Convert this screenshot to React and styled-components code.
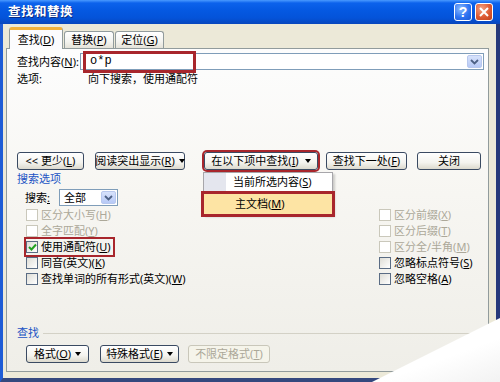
import React from "react";
import styled, { createGlobalStyle } from "styled-components";

const FONT = `"Noto Sans", "Noto Sans CJK SC", sans-serif`;
const RED = "#A8262C";

const Global = createGlobalStyle`
  *, *::before, *::after { box-sizing: border-box; }
  html, body { margin: 0; padding: 0; width: 500px; height: 382px; overflow: hidden; background: #fff; }
  body { font-family: ${FONT}; font-size: 11px; color: #000; }
`;

const Window = styled.div`
  position: relative;
  width: 500px;
  height: 382px;
  display: flex;
  flex-direction: column;
  overflow: hidden;
`;

const TitleBar = styled.div`
  height: 24px;
  flex: none;
  display: flex;
  align-items: center;
  padding: 0 7px 0 8px;
  background: linear-gradient(to bottom, #4A9AFF 0, #0C62EC 3px, #0559E2 10px, #0453D9 18px, #0846BC 24px);
`;

const Title = styled.div`
  flex: 1;
  color: #fff;
  font-weight: bold;
  font-size: 12.5px;
  line-height: 14px;
  letter-spacing: 0.5px;
  text-shadow: 1px 1px 0 #0A2A80;
`;

const CapButton = styled.div`
  width: 18px;
  height: 18px;
  margin-left: 3px;
  border: 1px solid #fff;
  border-radius: 3px;
  display: flex;
  align-items: center;
  justify-content: center;
  color: #fff;
  font-family: "Liberation Sans", sans-serif;
  font-weight: bold;
  font-size: 14px;
  line-height: 14px;
  background: ${(p) =>
    p.$close
      ? "radial-gradient(circle at 35% 30%, #F4A283 0, #DD5A33 55%, #C0421E 100%)"
      : "radial-gradient(circle at 35% 30%, #8CBBFF 0, #2F74F2 55%, #1B58D6 100%)"};
`;

const Body = styled.div`
  flex: 1;
  display: flex;
  flex-direction: column;
  background: #ECE9D8;
  border-left: 3px solid #1E5CD6;
  border-right: 4px solid #26397A;
  border-bottom: 4px solid #34487E;
  padding: 3px 7px 6px 3px;
`;

const TabRow = styled.div`
  display: flex;
  align-items: flex-end;
  height: 22px;
  margin-bottom: -1px;
  padding-left: 3px;
  position: relative;
  z-index: 2;
`;

const Tab = styled.div`
  width: ${(p) => p.$w}px;
  height: ${(p) => (p.$active ? 22 : 17)}px;
  margin-left: ${(p) => p.$ml || 0}px;
  margin-bottom: ${(p) => (p.$active ? 0 : 1)}px;
  display: flex;
  align-items: center;
  justify-content: center;
  line-height: 12px;
  padding-top: ${(p) => (p.$active ? 1 : 0)}px;
  border: 1px solid #919B9C;
  border-bottom: none;
  border-top: ${(p) => (p.$active ? "3px solid #F2B23C" : "1px solid #919B9C")};
  border-radius: 3px 3px 0 0;
  background: ${(p) => (p.$active ? "#FCFCFE" : "linear-gradient(#FFFFFF, #F3F3EF 60%, #E4E2D8)")};
`;

const Panel = styled.div`
  height: 324px;
  position: relative;
  z-index: 1;
  border: 1px solid #919B9C;
  background: linear-gradient(#FDFDFD 0, #F7F6F2 45%, #EFEEE8 100%);
  display: flex;
  flex-direction: column;
  padding: 4px 4px 8px 10px;
`;

const U = styled.span`
  text-decoration: underline;
`;

const FindRow = styled.div`
  display: flex;
  align-items: center;
  height: 17px;
`;

const Label = styled.div`
  width: ${(p) => p.$w}px;
  flex: none;
  line-height: 12px;
  color: ${(p) => (p.$blue ? "#2153C4" : "#000")};
`;

const Combo = styled.div`
  position: relative;
  height: 17px;
  flex: ${(p) => (p.$w ? "none" : "1")};
  width: ${(p) => (p.$w ? `${p.$w}px` : "auto")};
  background: #fff;
  border: 1px solid #7F9DB9;
  display: flex;
  align-items: center;
  padding-left: ${(p) => p.$pl}px;
  padding-right: 1px;
`;

const ComboText = styled.div`
  flex: 1;
  font-family: ${(p) => (p.$mono ? `"Liberation Mono", monospace` : FONT)};
  font-size: ${(p) => (p.$mono ? 12 : 11)}px;
  line-height: 13px;
`;

const DropBtn = styled.div`
  width: 15px;
  height: 13px;
  border: 1px solid #B8C8EE;
  border-radius: 2px;
  background: linear-gradient(#D7E2FB, #B7C9F6);
  display: flex;
  align-items: center;
  justify-content: center;
`;

const RedBox = styled.div`
  position: absolute;
  left: 2px;
  top: -3px;
  width: 113px;
  height: 22px;
  border: 3px solid ${RED};
  pointer-events: none;
`;

const InfoRow = styled.div`
  display: flex;
  margin-top: 3px;
  height: 12px;
`;

const ButtonRow = styled.div`
  display: flex;
  align-items: center;
  margin-top: ${(p) => p.$mt}px;
  padding-left: ${(p) => p.$pl || 0}px;
  height: 18px;
`;

const BtnWrap = styled.div`
  position: relative;
  margin-left: ${(p) => p.$ml || 0}px;
`;

const Btn = styled.div`
  width: ${(p) => p.$w}px;
  height: 18px;
  display: flex;
  align-items: center;
  justify-content: center;
  gap: 4px;
  line-height: 12px;
  white-space: nowrap;
  border: 1px solid ${(p) => (p.$disabled ? "#C9C7BA" : "#3A4A62")};
  border-radius: 3px;
  color: ${(p) => (p.$disabled ? "#ACA899" : "#000")};
  background: ${(p) =>
    p.$disabled ? "#F5F4EA" : "linear-gradient(#FFFFFF 0, #F4F3EE 60%, #DCD9CD 100%)"};
  box-shadow: ${(p) => (p.$mark ? `0 0 0 2px ${RED}` : "none")};
`;

const Caret = styled.span`
  width: 0;
  height: 0;
  border-left: 3px solid transparent;
  border-right: 3px solid transparent;
  border-top: 4px solid #000;
  margin-left: ${(p) => p.$ml || 0}px;
`;

const Menu = styled.div`
  position: absolute;
  top: 20px;
  left: -1px;
  width: 130px;
  background: #fff;
  border: 1px solid #A7A6AA;
  box-shadow: 2px 2px 2px rgba(0, 0, 0, 0.18);
  z-index: 5;
`;

const MenuItem = styled.div`
  display: flex;
  align-items: center;
  height: ${(p) => (p.$hot ? 20 : 18)}px;
  margin-top: ${(p) => (p.$hot ? 3 : 0)}px;
  line-height: 12px;
  background: ${(p) => (p.$hot ? "#FDE4A4" : "#fff")};
  box-shadow: ${(p) => (p.$hot ? `0 0 0 3px ${RED}` : "none")};
  padding-left: ${(p) => (p.$hot ? 31 : 0)}px;
`;

const IconStrip = styled.div`
  width: 22px;
  height: 100%;
  background: #E4E6EE;
  margin-right: 7px;
`;

const SearchRow = styled.div`
  display: flex;
  align-items: center;
  margin-top: 4px;
  padding-left: 8px;
  height: 17px;
`;

const Checks = styled.div`
  display: flex;
  margin-top: 1px;
  padding-left: 9px;
`;

const CheckCol = styled.div`
  display: flex;
  flex-direction: column;
  width: ${(p) => (p.$w ? `${p.$w}px` : "auto")};
`;

const CheckItem = styled.div`
  display: flex;
  align-items: center;
  height: 16px;
  align-self: flex-start;
  padding-right: 2px;
  line-height: 12px;
  color: ${(p) => (p.$disabled ? "#ACA899" : "#000")};
  outline: ${(p) => (p.$mark ? `2px solid ${RED}` : "none")};
  outline-offset: 0px;
`;

const Box = styled.div`
  width: 12px;
  height: 12px;
  margin-right: 3px;
  flex: none;
  display: flex;
  align-items: center;
  justify-content: center;
  border: 1px solid ${(p) => (p.$disabled ? "#CAC8BB" : "#5A6C84")};
  background: ${(p) => (p.$disabled ? "#FFFFFF" : "linear-gradient(135deg, #DEDDD6, #FFFFFF)")};
`;

const Group = styled.div`
  margin-top: auto;
  display: flex;
  flex-direction: column;
`;

const GroupHead = styled.div`
  display: flex;
  align-items: center;
  height: 12px;
`;

const GroupLine = styled.div`
  flex: 1;
  height: 1px;
  margin-left: 4px;
  background: #D3D1C6;
`;

const Curl = styled.div`
  position: absolute;
  right: 0;
  bottom: 0;
  width: 128px;
  height: 64px;
  background: linear-gradient(160deg, #FFFFFF 60%, #F2F2F2 100%);
  clip-path: polygon(0 100%, 100% 0, 100% 100%);
  z-index: 10;
`;

const Chevron = () => (
  <svg width="9" height="6" viewBox="0 0 9 6">
    <path d="M1 1 L4.5 4.5 L8 1" fill="none" stroke="#4D6185" strokeWidth="1.8" />
  </svg>
);

const Check = ({ label, disabled, checked, mark }) => (
  <CheckItem $disabled={disabled} $mark={mark}>
    <Box $disabled={disabled}>
      {checked && (
        <svg width="9" height="8" viewBox="0 0 9 8">
          <path d="M1 4 L3.5 6.5 L8 1.5" fill="none" stroke="#21A121" strokeWidth="2" />
        </svg>
      )}
    </Box>
    <span>{label}</span>
  </CheckItem>
);

export default function App() {
  return (
    <>
      <Global />
      <Window>
        <TitleBar>
          <Title>查找和替换</Title>
          <CapButton>?</CapButton>
          <CapButton $close>
            <svg width="10" height="10" viewBox="0 0 10 10">
              <path d="M1 1 L9 9 M9 1 L1 9" stroke="#fff" strokeWidth="2" />
            </svg>
          </CapButton>
        </TitleBar>
        <Body>
          <TabRow>
            <Tab $active $w={54}>
              <span>查找(<U>D</U>)</span>
            </Tab>
            <Tab $w={50} $ml={1}>
              <span>替换(<U>P</U>)</span>
            </Tab>
            <Tab $w={49} $ml={1}>
              <span>定位(<U>G</U>)</span>
            </Tab>
          </TabRow>
          <Panel>
            <FindRow>
              <Label $w={63}>
                查找内容(<U>N</U>):
              </Label>
              <Combo $pl={9}>
                <ComboText $mono>o*p</ComboText>
                <DropBtn>
                  <Chevron />
                </DropBtn>
                <RedBox />
              </Combo>
            </FindRow>
            <InfoRow>
              <Label $w={71}>选项:</Label>
              <Label>向下搜索，使用通配符</Label>
            </InfoRow>

            <ButtonRow $mt={67}>
              <BtnWrap>
                <Btn $w={67}>
                  <span>&lt;&lt; 更少(<U>L</U>)</span>
                </Btn>
              </BtnWrap>
              <BtnWrap $ml={11}>
                <Btn $w={90}>
                  <span>阅读突出显示(<U>R</U>)</span>
                  <Caret />
                </Btn>
              </BtnWrap>
              <BtnWrap $ml={19}>
                <Btn $w={114} $mark>
                  <span>在以下项中查找(<U>I</U>)</span>
                  <Caret $ml={2} />
                </Btn>
                <Menu>
                  <MenuItem>
                    <IconStrip />
                    <span>当前所选内容(<U>S</U>)</span>
                  </MenuItem>
                  <MenuItem $hot>
                    <span>主文档(<U>M</U>)</span>
                  </MenuItem>
                </Menu>
              </BtnWrap>
              <BtnWrap $ml={8}>
                <Btn $w={81}>
                  <span>查找下一处(<U>F</U>)</span>
                </Btn>
              </BtnWrap>
              <BtnWrap $ml={10}>
                <Btn $w={64}>
                  <span>关闭</span>
                </Btn>
              </BtnWrap>
            </ButtonRow>

            <InfoRow>
              <Label $blue>搜索选项</Label>
            </InfoRow>
            <SearchRow>
              <Label $w={34}>
                搜索<U>:</U>
              </Label>
              <Combo $w={59} $pl={4}>
                <ComboText>全部</ComboText>
                <DropBtn>
                  <Chevron />
                </DropBtn>
              </Combo>
            </SearchRow>

            <Checks>
              <CheckCol $w={353}>
                <Check disabled label={<>区分大小写(<U>H</U>)</>} />
                <Check disabled label={<>全字匹配(<U>Y</U>)</>} />
                <Check checked mark label={<>使用通配符(<U>U</U>)</>} />
                <Check label={<>同音(英文)(<U>K</U>)</>} />
                <Check label={<>查找单词的所有形式(英文)(<U>W</U>)</>} />
              </CheckCol>
              <CheckCol>
                <Check disabled label={<>区分前缀(<U>X</U>)</>} />
                <Check disabled label={<>区分后缀(<U>T</U>)</>} />
                <Check disabled label={<>区分全/半角(<U>M</U>)</>} />
                <Check label={<>忽略标点符号(<U>S</U>)</>} />
                <Check label={<>忽略空格(<U>A</U>)</>} />
              </CheckCol>
            </Checks>

            <Group>
              <GroupHead>
                <Label $blue>查找</Label>
                <GroupLine />
              </GroupHead>
              <ButtonRow $mt={6} $pl={9}>
                <BtnWrap>
                  <Btn $w={63}>
                    <span>格式(<U>O</U>)</span>
                    <Caret />
                  </Btn>
                </BtnWrap>
                <BtnWrap $ml={11}>
                  <Btn $w={79}>
                    <span>特殊格式(<U>E</U>)</span>
                    <Caret />
                  </Btn>
                </BtnWrap>
                <BtnWrap $ml={9}>
                  <Btn $w={82} $disabled>
                    <span>不限定格式(<U>T</U>)</span>
                  </Btn>
                </BtnWrap>
              </ButtonRow>
            </Group>
          </Panel>
        </Body>
        <Curl />
      </Window>
    </>
  );
}
